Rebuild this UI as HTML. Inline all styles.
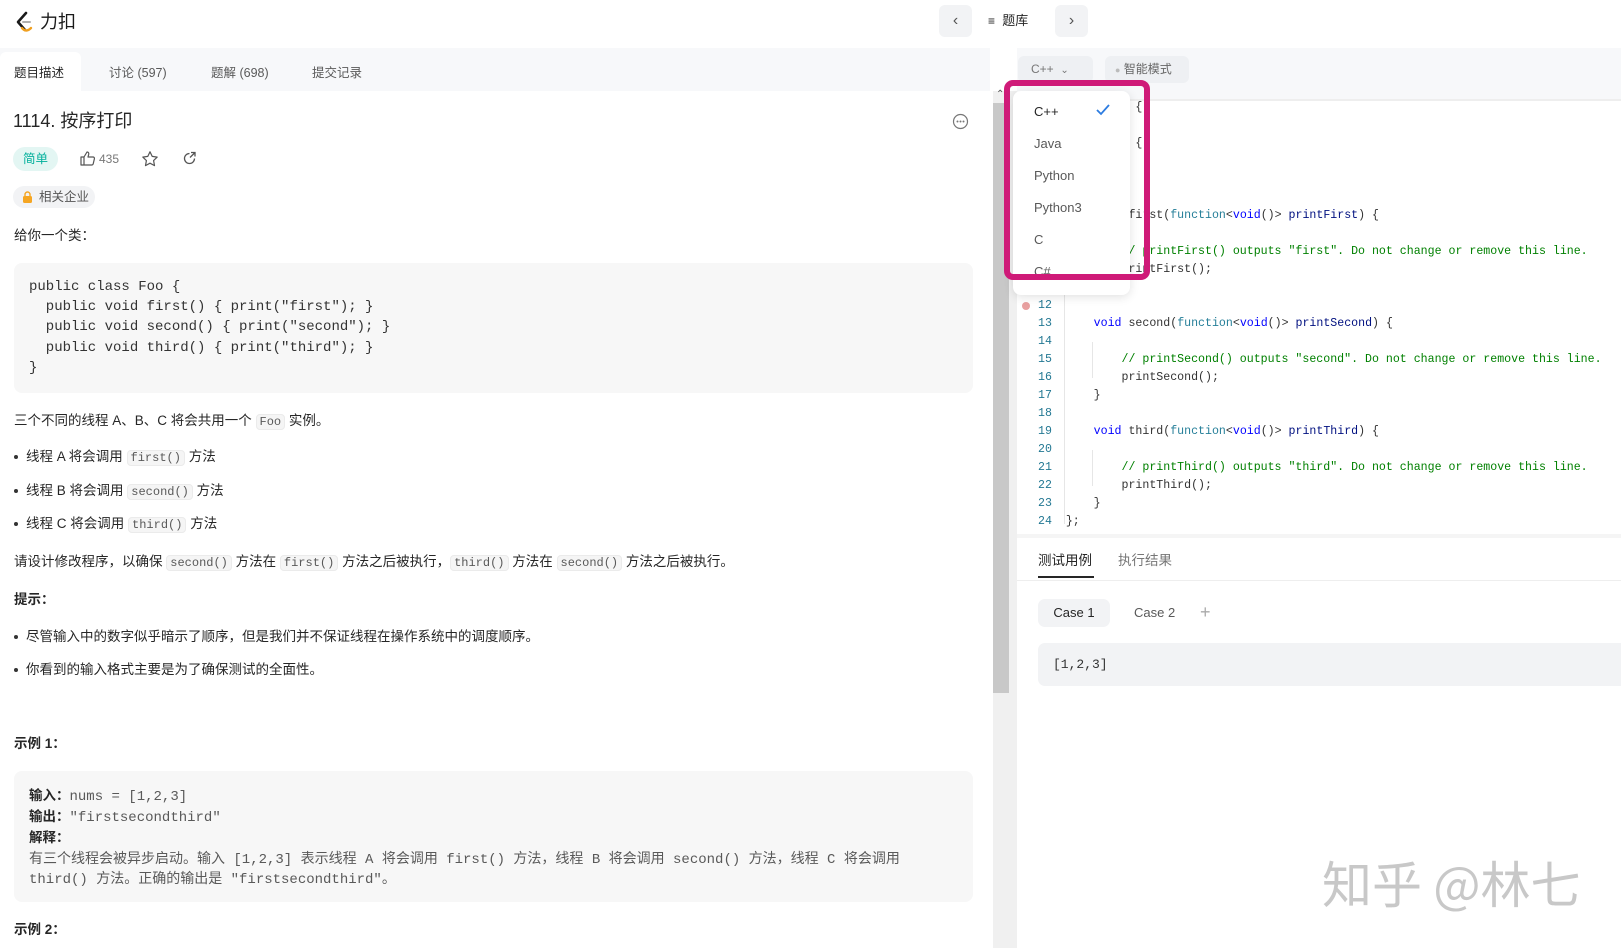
<!DOCTYPE html>
<html><head><meta charset="utf-8"><style>
*{margin:0;padding:0;box-sizing:border-box}
body{width:1621px;height:948px;overflow:hidden;background:#fff;font-family:"Liberation Sans","Noto Sans CJK SC",sans-serif;color:#262626;position:relative}
.a{position:absolute;white-space:nowrap}
.t{font-size:13.5px;line-height:20px;color:#262626}
.mono{font-family:"Liberation Mono","DejaVu Sans Mono",monospace}
.ic{font-family:"Liberation Mono",monospace;font-size:12px;background:#f5f5f5;border:1px solid #ebebeb;border-radius:4px;padding:0 3px;color:#595959}
.ed{font-family:"Liberation Mono","DejaVu Sans Mono",monospace;font-size:11.6px;line-height:18px;color:#333}
.ln{color:#237893;width:20px;text-align:right}
.k{color:#0000ff}.f{color:#267f99}.c{color:#008000}.v{color:#001080}
.dot{display:inline-block;width:4px;height:4px;border-radius:50%;background:#333;vertical-align:middle;margin-right:8px}
</style></head><body>
<svg class="a" style="left:15px;top:10px" width="18" height="24" viewBox="0 0 18 24"><path d="M11 3 L3 12 L10 20" fill="none" stroke="#1a1a1a" stroke-width="2.6" stroke-linecap="round" stroke-linejoin="round"/><path d="M7 18 Q11 23 16 18" fill="none" stroke="#f0a020" stroke-width="2.4" stroke-linecap="round"/><path d="M8 12 H15" stroke="#b0b0b0" stroke-width="2" stroke-linecap="round"/></svg>
<div class="a" style="left:40px;top:10px;font-size:18px;line-height:24px;color:#1a1a1a">力扣</div>
<div class="a" style="left:939px;top:5px;width:33px;height:32px;background:#f2f3f5;border-radius:6px;text-align:center;line-height:32px;color:#555;font-size:16px">&#x2039;</div>
<div class="a" style="left:988px;top:11px;font-size:13px;line-height:20px;color:#262626"><b style="font-size:12px">&#8801;</b>&nbsp;&nbsp;题库</div>
<div class="a" style="left:1055px;top:5px;width:33px;height:32px;background:#f2f3f5;border-radius:6px;text-align:center;line-height:32px;color:#555;font-size:16px">&#x203A;</div>

<div class="a" style="left:0;top:48px;width:990px;height:43px;background:#f7f8fa"></div>
<div class="a" style="left:0;top:52px;width:81px;height:39px;background:#fff;border-radius:6px 6px 0 0"></div>
<div class="a t" style="left:14px;top:63px;font-size:12.5px">题目描述</div>
<div class="a t" style="left:109px;top:63px;font-size:12.5px;color:#595959">讨论 (597)</div>
<div class="a t" style="left:211px;top:63px;font-size:12.5px;color:#595959">题解 (698)</div>
<div class="a t" style="left:312px;top:63px;font-size:12.5px;color:#595959">提交记录</div>

<div class="a" style="left:13px;top:108px;font-size:18px;line-height:26px;color:#262626">1114. 按序打印</div>
<svg class="a" style="left:952px;top:113px" width="17" height="17" viewBox="0 0 17 17"><circle cx="8.5" cy="8.5" r="7" fill="none" stroke="#777" stroke-width="1.2"/><circle cx="5.5" cy="8.5" r="1" fill="#777"/><circle cx="8.5" cy="8.5" r="1" fill="#777"/><circle cx="11.5" cy="8.5" r="1" fill="#777"/></svg>
<div class="a" style="left:13px;top:147px;width:45px;height:24px;background:#e3f6f3;border-radius:12px;color:#00af9b;font-size:12.5px;line-height:24px;text-align:center">简单</div>
<svg class="a" style="left:79px;top:150px" width="17" height="17" viewBox="0 0 17 17"><path d="M2 7h3v8H2zM5 7l3-5c1.5 0 2 1 1.7 2.4L9 7h5c1 0 1.6.8 1.4 1.7l-1.2 5.2c-.2.8-.8 1.1-1.6 1.1H5" fill="none" stroke="#555" stroke-width="1.2" stroke-linejoin="round"/></svg>
<div class="a" style="left:99px;top:151px;font-size:12px;color:#777;line-height:16px">435</div>
<svg class="a" style="left:141px;top:150px" width="18" height="18" viewBox="0 0 18 18"><path d="M9 1.8l2.2 4.6 5 .7-3.6 3.5.9 5-4.5-2.4-4.5 2.4.9-5L1.8 7.1l5-.7z" fill="none" stroke="#555" stroke-width="1.2" stroke-linejoin="round"/></svg>
<svg class="a" style="left:181px;top:150px" width="17" height="17" viewBox="0 0 17 17"><path d="M13.5 8.5A5 5 0 1 1 8.5 3.5" fill="none" stroke="#555" stroke-width="1.3"/><path d="M10 2.5h4v4M14 2.5l-5 5" fill="none" stroke="#555" stroke-width="1.3"/></svg>
<div class="a" style="left:13px;top:186px;width:82px;height:22px;background:#f2f3f5;border-radius:11px"></div>
<svg class="a" style="left:22px;top:191px" width="11" height="12" viewBox="0 0 11 12"><rect x="1" y="5" width="9" height="7" rx="1.5" fill="#f5a623"/><path d="M3 5V3.5a2.5 2.5 0 0 1 5 0V5" fill="none" stroke="#f5a623" stroke-width="1.4"/></svg>
<div class="a" style="left:39px;top:187px;font-size:12.5px;line-height:20px;color:#555">相关企业</div>

<div class="a t" style="left:14px;top:226px">给你一个类：</div>
<div class="a" style="left:14px;top:263px;width:959px;height:130px;background:#f7f7f7;border-radius:8px"></div>
<div class="a mono" style="left:29px;top:277px;font-size:14px;line-height:20.2px;color:#333;white-space:pre">public class Foo {
  public void first() { print("first"); }
  public void second() { print("second"); }
  public void third() { print("third"); }
}</div>
<div class="a t" style="left:14px;top:411px">三个不同的线程 A、B、C 将会共用一个 <span class="ic">Foo</span> 实例。</div>
<div class="a t" style="left:14px;top:447px"><span class="dot"></span>线程 A 将会调用 <span class="ic">first()</span> 方法</div>
<div class="a t" style="left:14px;top:481px"><span class="dot"></span>线程 B 将会调用 <span class="ic">second()</span> 方法</div>
<div class="a t" style="left:14px;top:514px"><span class="dot"></span>线程 C 将会调用 <span class="ic">third()</span> 方法</div>
<div class="a t" style="left:14px;top:552px">请设计修改程序，以确保 <span class="ic">second()</span> 方法在 <span class="ic">first()</span> 方法之后被执行，<span class="ic">third()</span> 方法在 <span class="ic">second()</span> 方法之后被执行。</div>
<div class="a t" style="left:14px;top:590px;font-weight:bold">提示：</div>
<div class="a t" style="left:14px;top:627px"><span class="dot"></span>尽管输入中的数字似乎暗示了顺序，但是我们并不保证线程在操作系统中的调度顺序。</div>
<div class="a t" style="left:14px;top:660px"><span class="dot"></span>你看到的输入格式主要是为了确保测试的全面性。</div>
<div class="a t" style="left:14px;top:734px;font-weight:bold">示例 1：</div>
<div class="a" style="left:14px;top:771px;width:959px;height:131px;background:#f7f7f7;border-radius:8px"></div>
<div class="a" style="left:29px;top:786px;font-size:14px;line-height:20.2px;color:#595959;white-space:pre;font-family:'Liberation Mono','Noto Sans CJK SC',monospace"><b style="color:#262626;font-size:13.5px;font-family:'Liberation Sans','Noto Sans CJK SC',sans-serif">输入：</b>nums = [1,2,3]
<b style="color:#262626;font-size:13.5px;font-family:'Liberation Sans','Noto Sans CJK SC',sans-serif">输出：</b>"firstsecondthird"
<b style="color:#262626;font-size:13.5px;font-family:'Liberation Sans','Noto Sans CJK SC',sans-serif">解释：</b>
有三个线程会被异步启动。输入 [1,2,3] 表示线程 A 将会调用 first() 方法，线程 B 将会调用 second() 方法，线程 C 将会调用
third() 方法。正确的输出是 "firstsecondthird"。</div>
<div class="a t" style="left:14px;top:920px;font-weight:bold">示例 2：</div>

<div class="a" style="left:993px;top:91px;width:24px;height:857px;background:#f0f0f0"></div>
<div class="a" style="left:993px;top:103px;width:16px;height:590px;background:#c8c8c8"></div>
<div class="a" style="left:996px;top:89px;font-size:10px;color:#555">&#x2303;</div>

<div class="a" style="left:1017px;top:48px;width:604px;height:51px;background:#f7f8fa"></div>
<div class="a" style="left:1018px;top:56px;width:75px;height:27px;background:#eef0f3;border-radius:6px;font-size:12px;line-height:27px;color:#777;padding-left:13px">C++ &nbsp;<span style="font-size:10px">&#8964;</span></div>
<div class="a" style="left:1105px;top:56px;width:84px;height:27px;background:#eef0f3;border-radius:6px;font-size:12px;line-height:27px;color:#666;padding-left:10px"><span style="color:#bbb;font-size:9px">●</span> 智能模式</div>
<div class="a" style="left:1017px;top:99px;width:604px;height:2px;background:#eee"></div>

<div class="a" style="left:1064px;top:99px;width:1px;height:425px;background:#e6e6e6"></div>
<div class="a" style="left:1092px;top:234px;width:1px;height:36px;background:#e6e6e6"></div>
<div class="a" style="left:1092px;top:342px;width:1px;height:36px;background:#e6e6e6"></div>
<div class="a" style="left:1092px;top:450px;width:1px;height:36px;background:#e6e6e6"></div>
<div class="a ed" style="left:1038px;top:99px;white-space:pre;line-height:18px"><span class="ln"> 1</span>  <span class="k">class</span> Foo {
<span class="ln"> 2</span>  <span class="k">public</span>:
<span class="ln"> 3</span>      Foo() {
<span class="ln"> 4</span>
<span class="ln"> 5</span>      }
<span class="ln"> 6</span>
<span class="ln"> 7</span>      <span class="k">void</span> first(<span class="f">function</span>&lt;<span class="k">void</span>()&gt; <span class="v">printFirst</span>) {
<span class="ln"> 8</span>
<span class="ln"> 9</span>          <span class="c">// printFirst() outputs "first". Do not change or remove this line.</span>
<span class="ln">10</span>          printFirst();
<span class="ln">11</span>      }
<span class="ln">12</span>
<span class="ln">13</span>      <span class="k">void</span> second(<span class="f">function</span>&lt;<span class="k">void</span>()&gt; <span class="v">printSecond</span>) {
<span class="ln">14</span>
<span class="ln">15</span>          <span class="c">// printSecond() outputs "second". Do not change or remove this line.</span>
<span class="ln">16</span>          printSecond();
<span class="ln">17</span>      }
<span class="ln">18</span>
<span class="ln">19</span>      <span class="k">void</span> third(<span class="f">function</span>&lt;<span class="k">void</span>()&gt; <span class="v">printThird</span>) {
<span class="ln">20</span>
<span class="ln">21</span>          <span class="c">// printThird() outputs "third". Do not change or remove this line.</span>
<span class="ln">22</span>          printThird();
<span class="ln">23</span>      }
<span class="ln">24</span>  };</div>
<div class="a" style="left:1022px;top:302px;width:8px;height:8px;border-radius:50%;background:#e8a0a0"></div>
<div class="a" style="left:1017px;top:534px;width:604px;height:4px;background:#f5f5f5"></div>

<div class="a" style="left:1013px;top:91px;width:117px;height:204px;background:#fff;border-radius:8px;box-shadow:0 2px 10px rgba(0,0,0,.12)"></div>
<div class="a" style="left:1034px;top:103px;font-size:13px;line-height:18px;color:#262626">C++</div>
<svg class="a" style="left:1095px;top:103px" width="16" height="14" viewBox="0 0 16 14"><path d="M2 7l4 4 8-9" fill="none" stroke="#2d7ce0" stroke-width="1.8"/></svg>
<div class="a" style="left:1034px;top:135px;font-size:13px;line-height:18px;color:#595959">Java</div>
<div class="a" style="left:1034px;top:167px;font-size:13px;line-height:18px;color:#595959">Python</div>
<div class="a" style="left:1034px;top:199px;font-size:13px;line-height:18px;color:#595959">Python3</div>
<div class="a" style="left:1034px;top:231px;font-size:13px;line-height:18px;color:#595959">C</div>
<div class="a" style="left:1034px;top:263px;font-size:13px;line-height:18px;color:#595959;height:12px;overflow:hidden">C#</div>
<div class="a" style="left:1004px;top:80px;width:146px;height:200px;border:6px solid #cf1a78;border-radius:9px"></div>

<div class="a" style="left:1038px;top:551px;font-size:13.5px;line-height:20px;color:#262626">测试用例</div>
<div class="a" style="left:1038px;top:576px;width:56px;height:2px;background:#262626"></div>
<div class="a" style="left:1118px;top:551px;font-size:13.5px;line-height:20px;color:#777">执行结果</div>
<div class="a" style="left:1017px;top:580px;width:604px;height:1px;background:#eee"></div>
<div class="a" style="left:1038px;top:599px;width:72px;height:28px;background:#f2f3f5;border-radius:7px;font-size:13px;line-height:28px;text-align:center;color:#262626">Case 1</div>
<div class="a" style="left:1134px;top:603px;font-size:13px;line-height:20px;color:#595959">Case 2</div>
<div class="a" style="left:1200px;top:601px;font-size:18px;line-height:22px;color:#aaa">+</div>
<div class="a" style="left:1038px;top:643px;width:583px;height:43px;background:#f2f3f5;border-radius:7px 0 0 7px"></div>
<div class="a mono" style="left:1053px;top:656px;font-size:13px;line-height:18px;color:#333">[1,2,3]</div>

<div class="a" style="left:1322px;top:852px;font-size:50px;line-height:60px;color:#c8c8c8;font-family:'Noto Sans CJK SC',sans-serif">知乎 @林七</div>
</body></html>
